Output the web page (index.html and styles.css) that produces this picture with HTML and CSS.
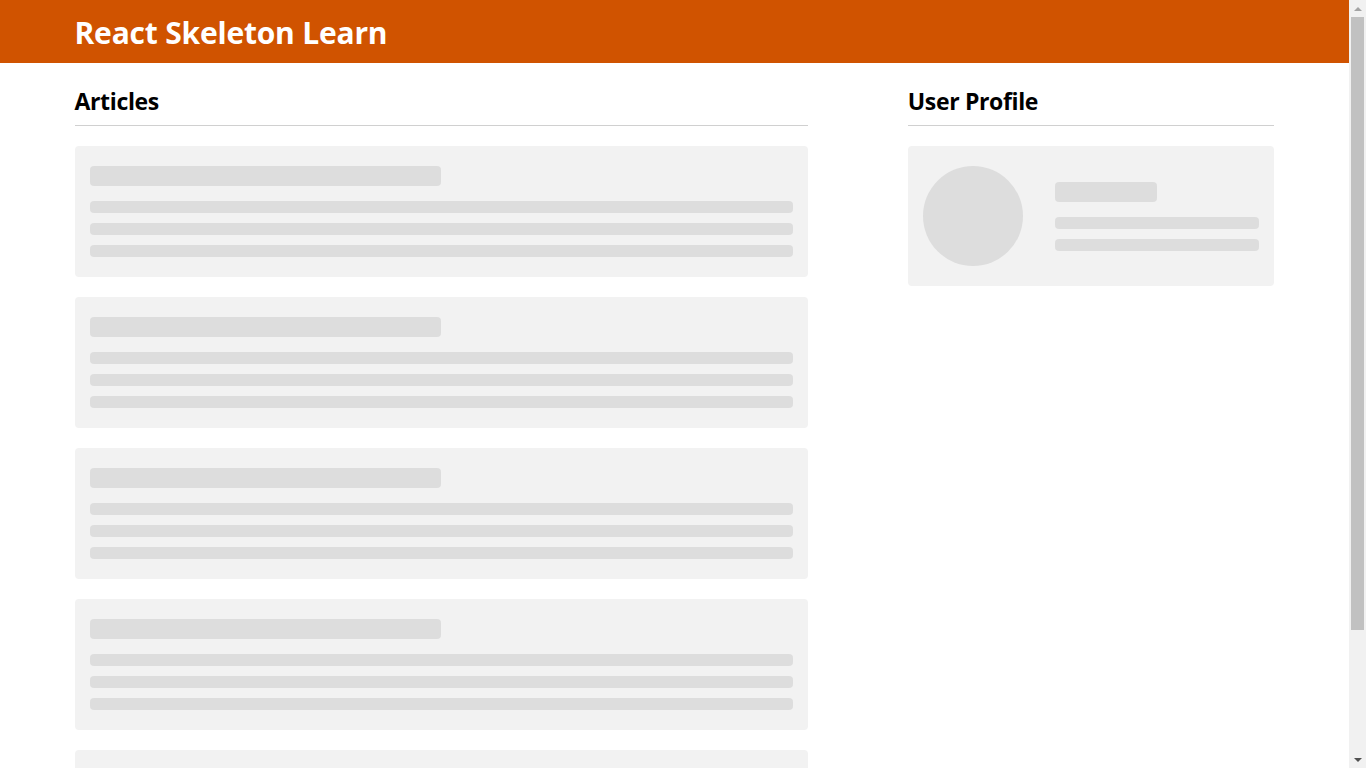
FILE: index.html
```html
<!DOCTYPE html>
<html lang="en">
<head>
<meta charset="utf-8">
<title>React Skeleton Learn</title>
<link rel="stylesheet" href="styles.css">
</head>
<body>
<div class="viewport">
  <header class="site-header">
    <div class="container">
      <h1 class="site-title">React Skeleton Learn</h1>
    </div>
  </header>
  <main class="container content">
    <section class="articles">
      <h2 class="section-title">Articles</h2>
      <div class="card article">
        <div class="sk sk-title"></div>
        <div class="sk sk-text"></div>
        <div class="sk sk-text"></div>
        <div class="sk sk-text"></div>
      </div>
      <div class="card article">
        <div class="sk sk-title"></div>
        <div class="sk sk-text"></div>
        <div class="sk sk-text"></div>
        <div class="sk sk-text"></div>
      </div>
      <div class="card article">
        <div class="sk sk-title"></div>
        <div class="sk sk-text"></div>
        <div class="sk sk-text"></div>
        <div class="sk sk-text"></div>
      </div>
      <div class="card article">
        <div class="sk sk-title"></div>
        <div class="sk sk-text"></div>
        <div class="sk sk-text"></div>
        <div class="sk sk-text"></div>
      </div>
      <div class="card article">
        <div class="sk sk-title"></div>
        <div class="sk sk-text"></div>
        <div class="sk sk-text"></div>
        <div class="sk sk-text"></div>
      </div>
    </section>
    <aside class="profile">
      <h2 class="section-title">User Profile</h2>
      <div class="card profile-card">
        <div class="sk sk-avatar"></div>
        <div class="profile-info">
          <div class="sk sk-title"></div>
          <div class="sk sk-text"></div>
          <div class="sk sk-text"></div>
        </div>
      </div>
    </aside>
  </main>
</div>
<div class="scrollbar" aria-hidden="true">
  <div class="sb-btn"><span class="sb-arrow sb-up"></span></div>
  <div class="sb-track"><div class="sb-thumb"></div></div>
  <div class="sb-btn"><span class="sb-arrow sb-down"></span></div>
</div>
</body>
</html>
```

FILE: styles.css
```css
* {
  box-sizing: border-box;
}

html, body {
  margin: 0;
  padding: 0;
}

body {
  font-family: "Open Sans", "Noto Sans", sans-serif;
  color: #000;
  background: #fff;
  display: flex;
  height: 100vh;
  overflow: hidden;
}

.viewport {
  flex: 1;
  min-width: 0;
  overflow: hidden;
}

.container {
  max-width: 1200px;
  margin: 0 auto;
}

.site-header {
  background: #d05300;
  height: 63px;
}

.site-title {
  margin: 0;
  padding-top: 2px;
  color: #fff;
  font-size: 30px;
  font-weight: 700;
  line-height: 61px;
  letter-spacing: -0.2px;
}

.content {
  display: grid;
  grid-template-columns: 2fr 1fr;
  gap: 100px;
  padding-top: 22px;
  padding-bottom: 19px;
}

.section-title {
  margin: 0 0 20px;
  font-size: 23px;
  font-weight: 700;
  line-height: 32px;
  letter-spacing: -0.35px;
  padding-bottom: 8px;
  border-bottom: 1px solid #d0d0d0;
}

.card {
  background: #f2f2f2;
  border-radius: 4px;
  padding: 20px 15px;
}

.article {
  margin-bottom: 20px;
}

.sk {
  background: #dddddd;
  border-radius: 4px;
}

.sk-title {
  width: 50%;
  height: 20px;
  margin-bottom: 15px;
}

.sk-text {
  height: 12px;
  margin-bottom: 10px;
}

.sk-text:last-child {
  margin-bottom: 0;
}

.profile-card {
  display: flex;
  align-items: center;
  gap: 32px;
}

.sk-avatar {
  width: 100px;
  height: 100px;
  border-radius: 50%;
  flex: none;
}

.profile-info {
  flex: 1;
}

/* window scrollbar */
.scrollbar {
  width: 17px;
  flex: none;
  background: #f1f1f1;
  display: flex;
  flex-direction: column;
}

.sb-btn {
  height: 17px;
  flex: none;
  display: flex;
  align-items: center;
  justify-content: center;
}

.sb-arrow {
  width: 0;
  height: 0;
  border-left: 4px solid transparent;
  border-right: 4px solid transparent;
}

.sb-up {
  border-bottom: 4px solid #a3a3a3;
}

.sb-down {
  border-top: 4px solid #505050;
}

.sb-track {
  flex: 1;
  padding: 0 2px;
}

.sb-thumb {
  height: 613px;
  background: #c1c1c1;
}
```
